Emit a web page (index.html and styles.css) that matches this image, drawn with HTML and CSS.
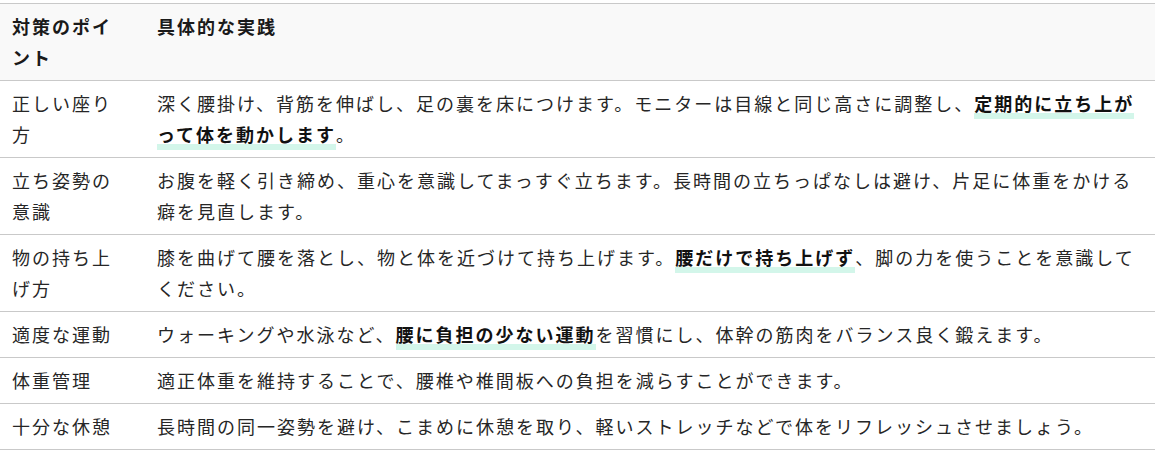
FILE: index.html
```html
<!DOCTYPE html>
<html lang="ja">
<head>
<meta charset="utf-8">
<link rel="stylesheet" href="styles.css">
</head>
<body>
<div class="wrap">
<table class="tbl">
  <thead>
    <tr><th class="c1">対策のポイント</th><th>具体的な実践</th></tr>
  </thead>
  <tbody>
    <tr><td class="c1">正しい座り方</td><td>深く腰掛け、背筋を伸ばし、足の裏を床につけます。モニターは目線と同じ高さに調整し、<strong class="hl">定期的に立ち上がって体を動かします</strong>。</td></tr>
    <tr><td class="c1">立ち姿勢の意識</td><td>お腹を軽く引き締め、重心を意識してまっすぐ立ちます。長時間の立ちっぱなしは避け、片足に体重をかける癖を見直します。</td></tr>
    <tr><td class="c1">物の持ち上げ方</td><td>膝を曲げて腰を落とし、物と体を近づけて持ち上げます。<strong class="hl">腰だけで持ち上げず</strong>、脚の力を使うことを意識してください。</td></tr>
    <tr><td class="c1">適度な運動</td><td>ウォーキングや水泳など、<strong class="hl">腰に負担の少ない運動</strong>を習慣にし、体幹の筋肉をバランス良く鍛えます。</td></tr>
    <tr><td class="c1">体重管理</td><td>適正体重を維持することで、腰椎や椎間板への負担を減らすことができます。</td></tr>
    <tr><td class="c1">十分な休憩</td><td>長時間の同一姿勢を避け、こまめに休憩を取り、軽いストレッチなどで体をリフレッシュさせましょう。</td></tr>
  </tbody>
</table>
</div>
</body>
</html>
```

FILE: styles.css
```css
html, body {
  margin: 0;
  padding: 0;
  background: #ffffff;
}
.wrap {
  padding-top: 3px;
}
.tbl {
  width: 100%;
  border-collapse: collapse;
  font-family: "Noto Sans CJK JP", "Noto Sans", sans-serif;
  font-size: 18px;
  letter-spacing: 2px;
  line-height: 31px;
  color: #262626;
}
.tbl th, .tbl td {
  text-align: left;
  vertical-align: top;
  padding: 7px 12px 7px 12px;
  border-top: 1px solid #c9c9c9;
  border-bottom: 1px solid #c9c9c9;
}
.tbl th {
  font-weight: 700;
  background: #f9f9f9;
  color: #1a1a1a;
}
.tbl .c1 {
  width: 109px;
  padding-right: 24px;
}
.hl {
  font-weight: 700;
  color: #111;
  padding-bottom: 3px;
  background: linear-gradient(transparent 78%, #d3f6ea 78%);
}
```
